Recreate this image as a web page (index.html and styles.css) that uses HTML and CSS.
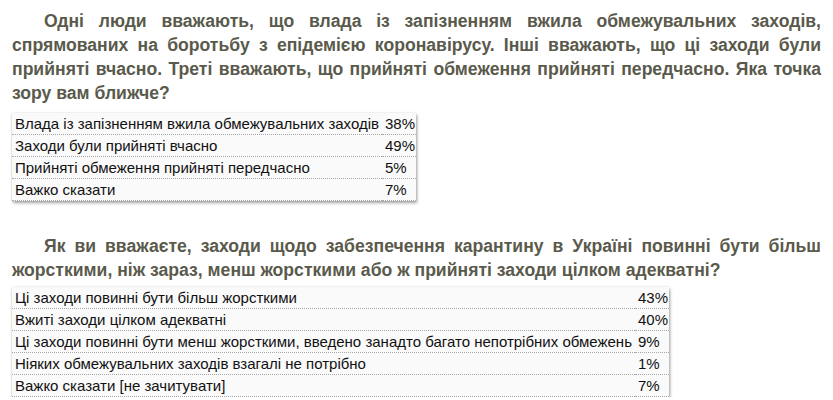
FILE: index.html
```html
<!DOCTYPE html>
<html lang="uk">
<head>
<meta charset="utf-8">
<link rel="stylesheet" href="styles.css">
</head>
<body>
<div class="page">
  <p class="q q1">Одні люди вважають, що влада із запізненням вжила обмежувальних заходів, спрямованих на боротьбу з епідемією коронавірусу. Інші вважають, що ці заходи були прийняті вчасно. Треті вважають, що прийняті обмеження прийняті передчасно. Яка точка зору вам ближче?</p>
  <table class="res t1">
    <tr><td>Влада із запізненням вжила обмежувальних заходів</td><td class="pct">38%</td></tr>
    <tr><td>Заходи були прийняті вчасно</td><td class="pct">49%</td></tr>
    <tr><td>Прийняті обмеження прийняті передчасно</td><td class="pct">5%</td></tr>
    <tr><td>Важко сказати</td><td class="pct">7%</td></tr>
  </table>
  <p class="q q2">Як ви вважаєте, заходи щодо забезпечення карантину в Україні повинні бути більш жорсткими, ніж зараз, менш жорсткими або ж прийняті заходи цілком адекватні?</p>
  <table class="res t2">
    <tr><td>Ці заходи повинні бути більш жорсткими</td><td class="pct">43%</td></tr>
    <tr><td>Вжиті заходи цілком адекватні</td><td class="pct">40%</td></tr>
    <tr><td>Ці заходи повинні бути менш жорсткими, введено занадто багато непотрібних обмежень</td><td class="pct">9%</td></tr>
    <tr><td>Ніяких обмежувальних заходів взагалі не потрібно</td><td class="pct">1%</td></tr>
    <tr><td>Важко сказати [не зачитувати]</td><td class="pct">7%</td></tr>
  </table>
</div>
</body>
</html>
```
FILE: styles.css
```css
html, body {
  margin: 0;
  padding: 0;
  background: #ffffff;
}
.page {
  padding: 9px 12px 0 12px;
}
.q {
  margin: 0;
  font-family: "Liberation Sans", Arial, sans-serif;
  font-weight: bold;
  font-size: 17.6px;
  line-height: 24px;
  color: #5a5a4c;
  text-align: justify;
  text-indent: 32px;
}
.q2 {
  margin-top: 33px;
}
.res {
  border-collapse: collapse;
  background: #fafafa;
  box-shadow: 1px 2px 3px rgba(0, 0, 0, 0.35), 0 0 2px rgba(0, 0, 0, 0.12);
  font-family: "Liberation Sans", Arial, sans-serif;
  font-size: 15px;
  line-height: 17px;
  color: #111111;
}
.res td {
  padding: 2px 3px;
  border-bottom: 1px dotted #a8a8a8;
  white-space: nowrap;
  vertical-align: middle;
}
.res td.pct {
  padding-right: 1px;
}
.t1 {
  margin-top: 8px;
}
.t2 {
  margin-top: 5px;
}
```
